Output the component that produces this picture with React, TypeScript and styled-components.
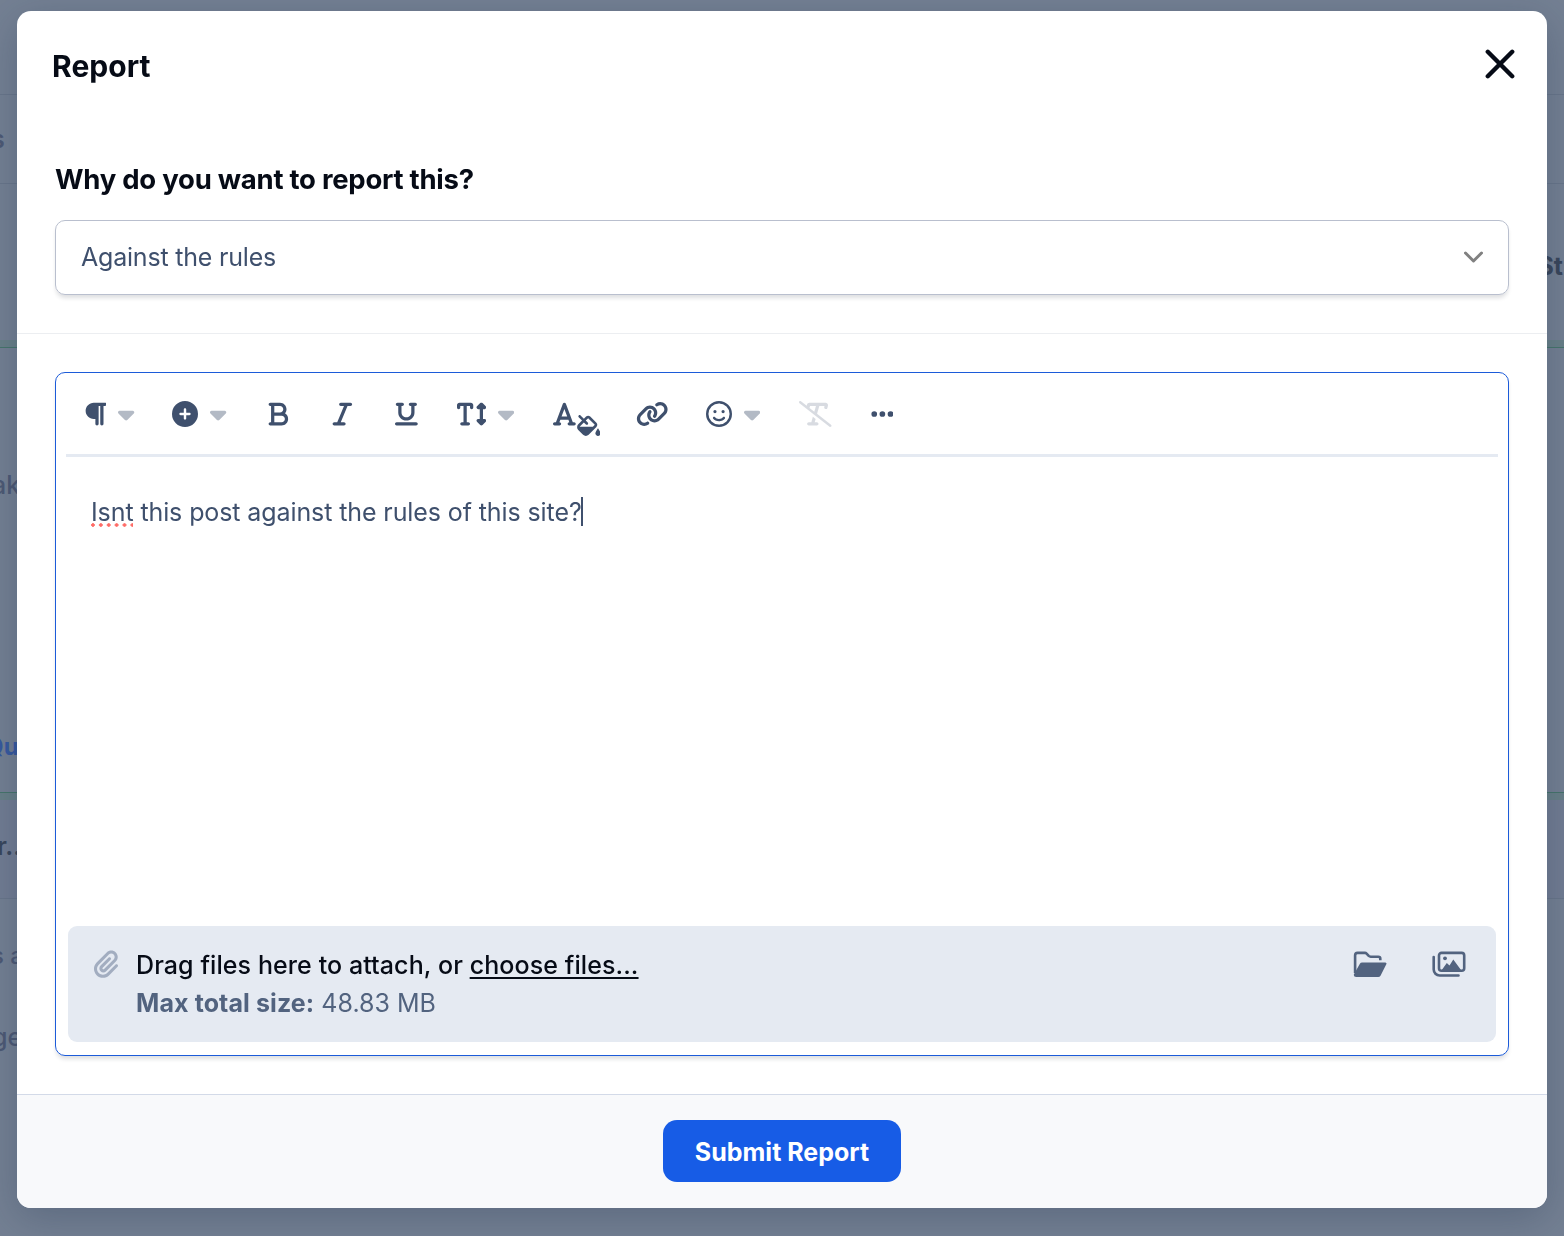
import React from "react";
import styled, { createGlobalStyle } from "styled-components";
import {
  FaBold,
  FaCaretDown,
  FaCirclePlus,
  FaEllipsis,
  FaFillDrip,
  FaFont,
  FaItalic,
  FaLink,
  FaPaperclip,
  FaParagraph,
  FaRegFaceSmile,
  FaTextHeight,
  FaTextSlash,
  FaUnderline,
} from "react-icons/fa6";

const GlobalStyle = createGlobalStyle`
  *, *::before, *::after { box-sizing: border-box; }
  body {
    margin: 0;
    overflow: hidden;
    background: #748093;
    font-family: Inter, "Liberation Sans", sans-serif;
  }
`;

const Page = styled.main`
  display: flex;
  flex-direction: column;
  height: 1236px;
  overflow: hidden;
`;

const Band = styled.section<{ $h: number; $line?: string; $pad?: number; $bg?: string }>`
  display: flex;
  justify-content: space-between;
  flex: none;
  height: ${(p) => p.$h}px;
  padding-top: ${(p) => p.$pad ?? 0}px;
  background: ${(p) => p.$bg ?? "transparent"};
  border-bottom: ${(p) => (p.$line ? `1px solid ${p.$line}` : "none")};
`;

const Stack = styled.div`
  display: flex;
  flex-direction: column;
  gap: 230px;
`;

const Snippet = styled.span<{ $size: number; $weight: number; $color: string; $shift?: number; $end?: number }>`
  font-size: ${(p) => p.$size}px;
  font-weight: ${(p) => p.$weight};
  line-height: 32px;
  height: 32px;
  color: ${(p) => p.$color};
  margin-left: ${(p) => p.$shift ?? 0}px;
  margin-right: ${(p) => p.$end ?? 0}px;
  white-space: nowrap;
`;

const Overlay = styled.div`
  position: fixed;
  inset: 0;
  padding: 11px 17px 28px;
`;

const Dialog = styled.div`
  display: flex;
  flex-direction: column;
  height: 1197px;
  border-radius: 14px;
  overflow: hidden;
  background: #fff;
  box-shadow: 0 10px 40px rgba(30, 45, 75, 0.28);
`;

const Header = styled.header`
  display: flex;
  justify-content: space-between;
  align-items: center;
  height: 110px;
  padding: 0 32px 0 35px;
`;

const Title = styled.h1`
  margin: 0;
  font-size: 30px;
  font-weight: 700;
  letter-spacing: 0.05px;
  line-height: 36px;
  color: #060b16;
`;

const CloseButton = styled.button`
  display: flex;
  padding: 0;
  margin-bottom: 4px;
  border: 0;
  background: none;
  color: #060b16;
`;

const Reason = styled.section`
  height: 213px;
  padding: 40px 38px 0;
  border-bottom: 1px solid #eceef1;
`;

const Label = styled.label`
  display: block;
  height: 36px;
  line-height: 36px;
  margin-bottom: 23px;
  font-size: 27.5px;
  font-weight: 700;
  letter-spacing: -0.25px;
  color: #060b16;
`;

const Select = styled.div`
  display: flex;
  align-items: center;
  justify-content: space-between;
  height: 75px;
  padding: 0 24px 2px 25px;
  border: 1px solid #b9bfce;
  border-radius: 10px;
  box-shadow: 0 4px 4px -1px rgba(20, 25, 45, 0.14);
  font-size: 25px;
  letter-spacing: -0.2px;
  color: #3f506d;
`;

const Compose = styled.section`
  flex: 1;
  padding: 38px 38px 0;
`;

const Editor = styled.div`
  display: flex;
  flex-direction: column;
  height: 684px;
  padding: 0 10px 13px;
  border: 1px solid #1c5bd9;
  border-radius: 10px;
  box-shadow: 0 4px 4px -1px rgba(20, 25, 45, 0.14);
`;

const Toolbar = styled.div`
  display: flex;
  height: 84px;
  border-bottom: 3px solid #e5eaf2;
`;

const Tool = styled.button<{ $w: number; $disabled?: boolean }>`
  display: flex;
  align-items: center;
  justify-content: center;
  flex: none;
  gap: 12px;
  width: ${(p) => p.$w}px;
  padding: 0;
  border: 0;
  background: none;
  color: #3f506d;
  opacity: ${(p) => (p.$disabled ? 0.2 : 1)};
`;

const Glyph = styled.span<{ $w: number; $h?: number; $drop?: number; $tone?: string }>`
  display: flex;
  margin-top: ${(p) => p.$drop ?? 0}px;
  color: ${(p) => p.$tone ?? "inherit"};

  svg {
    width: ${(p) => p.$w}px;
    height: ${(p) => p.$h ?? 26}px;
  }
`;

const ColorPair = styled.span`
  display: flex;
  align-items: center;
  gap: 1px;
`;

const Body = styled.div`
  flex: 1;
  display: flex;
  align-items: flex-start;
  padding: 36px 25px;
  font-size: 25px;
  line-height: 38px;
  letter-spacing: -0.1px;
  color: #3f506d;
`;

const Misspelled = styled.span`
  background: radial-gradient(circle, #ff6b66 1.5px, transparent 2px) -2px 100% / 7.9px 4px repeat-x;
`;

const TextCursor = styled.span`
  width: 2px;
  height: 29px;
  margin: 4px 0 0 -1px;
  background: #3f506d;
`;

const Uploader = styled.div`
  display: flex;
  height: 116px;
  margin: 0 2px;
  padding: 20px 30px 0 25px;
  border-radius: 9px;
  background: #e5eaf2;
`;

const ClipIcon = styled(FaPaperclip)`
  width: 26px;
  height: 28px;
  margin: 4px 17px 0 0;
  color: #a2adc0;
`;

const UploadText = styled.div`
  flex: 1;
  font-size: 25px;
  line-height: 38px;
  color: #52637f;

  b {
    letter-spacing: 0.1px;
  }
`;

const Prompt = styled.div`
  font-weight: 500;
  letter-spacing: 0.09px;
  color: #060b16;
`;

const Choose = styled.a`
  text-decoration: underline;
  text-decoration-thickness: 2px;
  text-underline-offset: 3px;
`;

const Actions = styled.div`
  display: flex;
  gap: 45px;
  padding-top: 5px;
  color: #52637f;
`;

const Footer = styled.footer`
  display: flex;
  justify-content: center;
  height: 114px;
  padding-top: 25px;
  border-top: 1px solid #d3dae8;
  background: #f8f9fb;
`;

const Submit = styled.button`
  width: 238px;
  height: 62px;
  padding: 2px 0 0;
  border: 0;
  border-radius: 14px;
  background: #175ce6;
  color: #fff;
  font-family: inherit;
  font-size: 25px;
  font-weight: 700;
`;

const CloseIcon = () => (
  <svg width="30" height="30" viewBox="0 0 30 30" fill="none" stroke="currentColor" strokeWidth="4.4" strokeLinecap="round">
    <path d="M2.800 2.800 27.200 27.200M27.200 2.800 2.800 27.200" />
  </svg>
);

const ChevronIcon = () => (
  <svg width="20" height="12" viewBox="0 0 20 12" fill="none" stroke="#808080" strokeWidth="3" strokeLinecap="round" strokeLinejoin="round">
    <path d="M1.500 2l8 8 8-8" />
  </svg>
);

const FolderIcon = () => (
  <svg width="34" height="27" viewBox="0 0 34 27" fill="currentColor">
    <path d="M27.300 9.200V7.700a2 2 0 0 0-2-2h-7.600a3 3 0 0 1-2-.8L13.600 2.600a2.500 2.500 0 0 0-1.700-.7H4.600a2.500 2.500 0 0 0-2.500 2.500V22" fill="none" stroke="currentColor" strokeWidth="2.600" />
    <path d="M9.100 11.500H32.300a1.200 1.200 0 0 1 1 1.800L27.500 24.700a2.600 2.600 0 0 1-2.300 1.400H3.300A2.500 2.500 0 0 1 .8 23.600L6.900 12.800a2.500 2.500 0 0 1 2.200-1.300z" />
  </svg>
);

const ImagesIcon = () => (
  <svg width="34" height="27" viewBox="0 0 34 27" fill="none" stroke="currentColor" strokeWidth="2.600" strokeLinecap="round" strokeLinejoin="round">
    <rect x="7" y="1.900" width="25.200" height="17.800" rx="2.500" />
    <path d="M1.700 6v12.500a6 6 0 0 0 6 6H26.500" />
    <circle cx="13" cy="7.300" r="1.900" fill="currentColor" stroke="none" />
    <path d="M9.800 19l5-7 2.700 2.500L21.300 8.500l7.700 10.500z" fill="currentColor" stroke="none" />
  </svg>
);

const DropCaret = () => (
  <Glyph $w={16.25} $tone="#b3bac5">
    <FaCaretDown />
  </Glyph>
);

const MUTED = "#4d5974";
const STRONG = "#39465b";
const LINE = "#69768a";
const GREEN = "#46756b";
const TINT = "#698088";

export default function App() {
  return (
    <>
      <GlobalStyle />
      <Page>
        <Band $h={95} $line={LINE} />
        <Band $h={89} $line={LINE} $pad={28}>
          <Snippet $size={25} $weight={600} $color={MUTED} $shift={-9}>s</Snippet>
        </Band>
        <Band $h={156} $pad={66}>
          <span />
          <Snippet $size={25} $weight={700} $color={STRONG} $end={1}>St</Snippet>
        </Band>
        <Band $h={8} $bg={TINT} $line={GREEN} />
        <Band $h={445} $pad={121} $line={GREEN}>
          <Stack>
            <Snippet $size={25} $weight={500} $color={MUTED} $shift={-8}>ak</Snippet>
            <Snippet $size={24} $weight={700} $color="#37599f" $shift={-15}>Qu</Snippet>
          </Stack>
        </Band>
        <Band $h={7} $bg={TINT} />
        <Band $h={99} $pad={30} $line={LINE} $bg="#727d93">
          <Snippet $size={25} $weight={600} $color={STRONG} $shift={-3}>r...</Snippet>
        </Band>
        <Band $h={76} $pad={41}>
          <Snippet $size={24} $weight={500} $color={MUTED} $shift={-9}>s a</Snippet>
        </Band>
        <Band $h={261} $pad={46}>
          <Snippet $size={25} $weight={500} $color={MUTED} $shift={-8}>ge</Snippet>
        </Band>
      </Page>
      <Overlay>
        <Dialog role="dialog">
          <Header>
            <Title>Report</Title>
            <CloseButton aria-label="Close">
              <CloseIcon />
            </CloseButton>
          </Header>
          <Reason>
            <Label>Why do you want to report this?</Label>
            <Select>
              Against the rules
              <ChevronIcon />
            </Select>
          </Reason>
          <Compose>
            <Editor>
              <Toolbar>
                <Tool $w={86}><Glyph $w={22.75}><FaParagraph /></Glyph><DropCaret /></Tool>
                <Tool $w={95}><Glyph $w={26}><FaCirclePlus /></Glyph><DropCaret /></Tool>
                <Tool $w={62}><Glyph $w={22.75}><FaBold /></Glyph></Tool>
                <Tool $w={66}><Glyph $w={22.75}><FaItalic /></Glyph></Tool>
                <Tool $w={63}><Glyph $w={22.75}><FaUnderline /></Glyph></Tool>
                <Tool $w={95}><Glyph $w={29.25}><FaTextHeight /></Glyph><DropCaret /></Tool>
                <Tool $w={87}>
                  <ColorPair>
                    <Glyph $w={22.75}><FaFont /></Glyph>
                    <Glyph $w={23.6} $h={21} $drop={23}><FaFillDrip /></Glyph>
                  </ColorPair>
                </Tool>
                <Tool $w={65}><Glyph $w={32.5}><FaLink /></Glyph></Tool>
                <Tool $w={96}><Glyph $w={26}><FaRegFaceSmile /></Glyph><DropCaret /></Tool>
                <Tool $w={69} $disabled><Glyph $w={32.5}><FaTextSlash /></Glyph></Tool>
                <Tool $w={64}><Glyph $w={22.75}><FaEllipsis /></Glyph></Tool>
              </Toolbar>
              <Body>
                <div><Misspelled>Isnt</Misspelled> this post against the rules of this site?</div>
                <TextCursor />
              </Body>
              <Uploader>
                <ClipIcon />
                <UploadText>
                  <Prompt>Drag files here to attach, or <Choose>choose files...</Choose></Prompt>
                  <b>Max total size:</b> 48.83 MB
                </UploadText>
                <Actions>
                  <FolderIcon />
                  <ImagesIcon />
                </Actions>
              </Uploader>
            </Editor>
          </Compose>
          <Footer>
            <Submit>Submit Report</Submit>
          </Footer>
        </Dialog>
      </Overlay>
    </>
  );
}
